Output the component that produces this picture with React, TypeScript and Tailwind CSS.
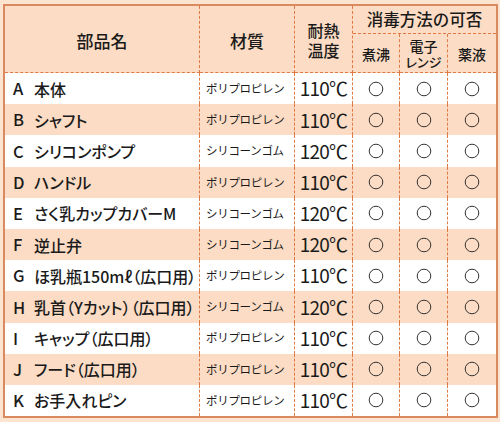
import React from "react";

const rows: [string, string, string, string][] = [
  ["A", "本体", "ポリプロピレン", "110℃"],
  ["B", "シャフト", "ポリプロピレン", "110℃"],
  ["C", "シリコンポンプ", "シリコーンゴム", "120℃"],
  ["D", "ハンドル", "ポリプロピレン", "110℃"],
  ["E", "さく乳カップカバーM", "シリコーンゴム", "120℃"],
  ["F", "逆止弁", "シリコーンゴム", "120℃"],
  ["G", "ほ乳瓶150mℓ（広口用）", "ポリプロピレン", "110℃"],
  ["H", "乳首（Yカット）（広口用）", "シリコーンゴム", "120℃"],
  ["I", "キャップ（広口用）", "ポリプロピレン", "110℃"],
  ["J", "フード（広口用）", "ポリプロピレン", "110℃"],
  ["K", "お手入れピン", "ポリプロピレン", "110℃"],
];

const Circle = () => (
  <svg width="16" height="16" viewBox="0 0 16 16">
    <circle cx="8" cy="8" r="6.8" fill="none" stroke="#333" strokeWidth="1" />
  </svg>
);

export default function App() {
  const font = { fontFamily: '"Noto Sans CJK JP", "Noto Sans", sans-serif' };
  const dr = "border-r border-dashed border-[#e07a45]";
  return (
    <div className="w-[500px] h-[422px] bg-[#fce4d0] pt-[4px] pl-[3px] text-[#1a1a1a]" style={font}>
      <div className="w-[495px] border-2 border-[#d98a5e] grid grid-cols-[195px_95px_58px_47px_48px_48px] grid-rows-[28px_39px_repeat(11,31.2px)] bg-[#fcdcc4]">
        {/* header */}
        <div className={`row-span-2 flex items-center justify-center text-[17px] font-medium pt-[4px] border-b border-dashed border-[#e07a45] ${dr}`}>部品名</div>
        <div className={`row-span-2 flex items-center justify-center text-[17px] font-medium pt-[4px] border-b border-dashed border-[#e07a45] ${dr}`}>材質</div>
        <div className={`row-span-2 flex flex-col items-center justify-center text-[16px] font-medium leading-[20px] pt-[2px] border-b border-dashed border-[#e07a45] ${dr}`}>
          <span>耐熱</span>
          <span>温度</span>
        </div>
        <div className="col-span-3 flex items-center justify-center text-[16.5px] font-medium border-b border-dashed border-[#e07a45]">消毒方法の可否</div>
        <div className={`flex items-center justify-center text-[14px] font-medium pt-[3px] border-b border-dashed border-[#e07a45] ${dr}`}>煮沸</div>
        <div className={`flex flex-col items-center justify-center font-medium pt-[2px] border-b border-dashed border-[#e07a45] ${dr}`}>
          <span className="text-[14px] leading-[16px]">電子</span>
          <span className="text-[13px] leading-[16px] [font-feature-settings:'palt']">レンジ</span>
        </div>
        <div className="flex items-center justify-center text-[14px] font-medium pt-[3px] border-b border-dashed border-[#e07a45]">薬液</div>

        {rows.map(([l, name, mat, temp], i) => {
          const bg = i % 2 === 0 ? "bg-white" : "bg-[#fcdcc4]";
          return (
            <React.Fragment key={l}>
              <div className={`${bg} ${dr} flex items-center pl-[8px] text-[16.5px] font-medium whitespace-nowrap overflow-hidden`}>
                <span className="w-[21px] shrink-0">{l}</span>
                <span className="text-[16px] [font-feature-settings:'palt']">{name}</span>
              </div>
              <div className={`${bg} ${dr} flex items-center pl-[6px] text-[11.5px] tracking-[-0.3px] whitespace-nowrap`}>{mat}</div>
              <div className={`${bg} ${dr} flex items-center justify-center text-[19px] tracking-[-0.8px] whitespace-nowrap`}>{temp}</div>
              <div className={`${bg} ${dr} flex items-center justify-center`}><Circle /></div>
              <div className={`${bg} ${dr} flex items-center justify-center`}><Circle /></div>
              <div className={`${bg} flex items-center justify-center`}><Circle /></div>
            </React.Fragment>
          );
        })}
      </div>
    </div>
  );
}
